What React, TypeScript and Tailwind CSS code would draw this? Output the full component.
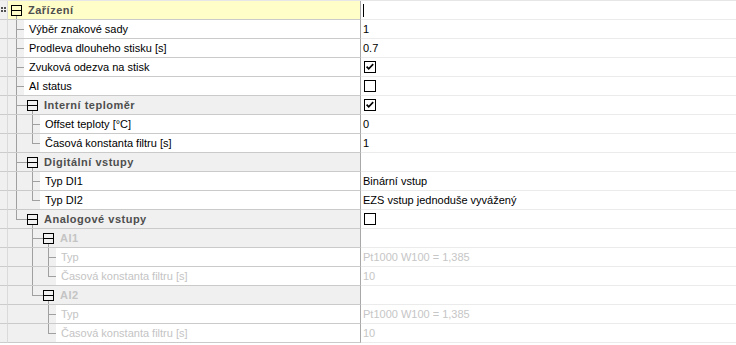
import React from "react";

type Unit = "I" | "T" | "L" | " ";

type Value =
  | { type: "text"; text: string }
  | { type: "check"; checked: boolean }
  | { type: "caret" }
  | { type: "none" };

type Row = {
  kind: "group" | "leaf";
  label: string;
  units: Unit[];
  value: Value;
  selected?: boolean;
  disabled?: boolean;
};

const txt = (text: string): Value => ({ type: "text", text });
const chk = (checked: boolean): Value => ({ type: "check", checked });
const none: Value = { type: "none" };

const rows: Row[] = [
  { kind: "group", label: "Zařízení", units: [], value: { type: "caret" }, selected: true },
  { kind: "leaf", label: "Výběr znakové sady", units: ["T"], value: txt("1") },
  { kind: "leaf", label: "Prodleva dlouheho stisku [s]", units: ["T"], value: txt("0.7") },
  { kind: "leaf", label: "Zvuková odezva na stisk", units: ["T"], value: chk(true) },
  { kind: "leaf", label: "AI status", units: ["T"], value: chk(false) },
  { kind: "group", label: "Interní teploměr", units: ["T"], value: chk(true) },
  { kind: "leaf", label: "Offset teploty [°C]", units: ["I", "T"], value: txt("0") },
  { kind: "leaf", label: "Časová konstanta filtru [s]", units: ["I", "L"], value: txt("1") },
  { kind: "group", label: "Digitální vstupy", units: ["T"], value: none },
  { kind: "leaf", label: "Typ DI1", units: ["I", "T"], value: txt("Binární vstup") },
  { kind: "leaf", label: "Typ DI2", units: ["I", "L"], value: txt("EZS vstup jednoduše vyvážený") },
  { kind: "group", label: "Analogové vstupy", units: ["L"], value: chk(false) },
  { kind: "group", label: "AI1", units: [" ", "T"], value: none, disabled: true },
  { kind: "leaf", label: "Typ", units: [" ", "I", "T"], value: txt("Pt1000 W100 = 1,385"), disabled: true },
  { kind: "leaf", label: "Časová konstanta filtru [s]", units: [" ", "I", "L"], value: txt("10"), disabled: true },
  { kind: "group", label: "AI2", units: [" ", "L"], value: none, disabled: true },
  { kind: "leaf", label: "Typ", units: [" ", " ", "T"], value: txt("Pt1000 W100 = 1,385"), disabled: true },
  { kind: "leaf", label: "Časová konstanta filtru [s]", units: [" ", " ", "L"], value: txt("10"), disabled: true },
];

// one indentation step of the tree, with its connector lines
function TreeUnit({ type }: { type: Unit }) {
  return (
    <div className="relative w-[16px] h-full shrink-0">
      {(type === "I" || type === "T") && (
        <span className="absolute left-[8px] top-0 bottom-0 w-px bg-[#a0a0a0]" />
      )}
      {type === "L" && <span className="absolute left-[8px] top-0 h-[10px] w-px bg-[#a0a0a0]" />}
      {(type === "T" || type === "L") && (
        <span className="absolute left-[8px] right-0 top-[9px] h-px bg-[#a0a0a0]" />
      )}
    </div>
  );
}

function CollapseBox({ connector }: { connector: boolean }) {
  return (
    <div className="relative w-[16px] h-full shrink-0">
      {connector && <span className="absolute left-0 w-[3px] top-[9px] h-px bg-[#a0a0a0]" />}
      <svg className="absolute left-[3px] top-[4px]" width="11" height="11" viewBox="0 0 11 11">
        <rect x="0.5" y="0.5" width="10" height="10" fill="none" stroke="#000" />
        <line x1="0" y1="5.5" x2="11" y2="5.5" stroke="#000" />
      </svg>
      <span className="absolute left-[8px] top-[15px] bottom-0 w-px bg-[#a0a0a0]" />
    </div>
  );
}

function CheckBox({ checked }: { checked: boolean }) {
  return (
    <svg width="12" height="12" viewBox="0 0 12 12" className="ml-[1px]">
      <rect x="0.5" y="0.5" width="11" height="11" fill="#fff" stroke="#000" />
      {checked && <path d="M2.6 5.6 L4.7 7.8 L9.2 3.2" fill="none" stroke="#000" strokeWidth="1.7" />}
    </svg>
  );
}

function ValueCell({ value, disabled }: { value: Value; disabled?: boolean }) {
  return (
    <div className="flex-1 flex items-center h-full border-b border-[#ebebeb] bg-white pl-[2px]">
      {value.type === "text" && (
        <span className={disabled ? "text-[#c6c6c6]" : "text-black"}>{value.text}</span>
      )}
      {value.type === "check" && <CheckBox checked={value.checked} />}
      {value.type === "caret" && <span className="block w-px h-[13px] bg-black" />}
    </div>
  );
}

function PropertyRow({ row, first }: { row: Row; first: boolean }) {
  const group = row.kind === "group";
  const textColor = row.disabled ? "text-[#c4c4c4]" : group ? "text-[#4e4e4e]" : "text-black";
  const nameBg = row.selected ? "bg-[#fffdc8]" : "bg-[#f0f0f0]";

  return (
    <div className="flex h-[19px]">
      {/* gutter */}
      <div className="w-[8px] shrink-0 h-full bg-[#f0f0f0] border-r border-b border-r-[#dadada] border-b-[#cccccc] flex items-center pl-[1px]">
        {first && (
          <svg width="6" height="5" viewBox="0 0 6 5" className="-mt-[1px]">
            <rect x="0" y="0" width="2" height="2" fill="#505050" />
            <rect x="3" y="0" width="2" height="2" fill="#505050" />
            <rect x="0" y="3" width="2" height="2" fill="#505050" />
            <rect x="3" y="3" width="2" height="2" fill="#505050" />
          </svg>
        )}
      </div>

      {/* name column */}
      <div className={`w-[353px] shrink-0 h-full flex border-r border-b border-r-[#a8a8a8] border-b-[#cacaca] ${nameBg}`}>
        {row.units.map((u, i) => (
          <TreeUnit key={i} type={u} />
        ))}
        {group ? (
          <>
            <CollapseBox connector={row.units.length > 0} />
            <div className={`flex items-center pl-[4px] font-bold tracking-[0.5px] ${textColor}`}>{row.label}</div>
          </>
        ) : (
          <div className={`flex-1 flex items-center bg-white pl-[5px] ${textColor}`}>{row.label}</div>
        )}
      </div>

      <ValueCell value={row.value} disabled={row.disabled} />
    </div>
  );
}

export default function App() {
  return (
    <div
      className="w-[736px] h-[345px] bg-white overflow-hidden text-[11px] leading-none"
      style={{ fontFamily: '"Liberation Sans", Arial, sans-serif' }}
    >
      <div className="border-t border-[#e6e6e6]">
        {rows.map((row, i) => (
          <PropertyRow key={i} row={row} first={i === 0} />
        ))}
      </div>
    </div>
  );
}
